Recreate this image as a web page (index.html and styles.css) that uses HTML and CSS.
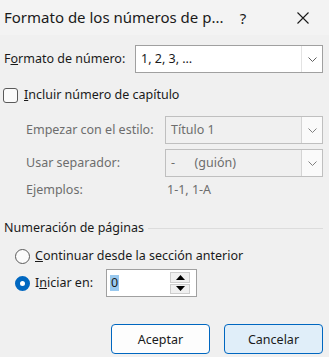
FILE: index.html
```html
<!DOCTYPE html>
<html lang="es">

<head>
    <meta charset="UTF-8">
    <title>Formato de los números de página</title>
    <link rel="stylesheet" href="styles.css">
</head>

<body>

    <div class="dialog">
        <div class="titlebar">
            <div class="title">Formato de los números de p...</div>
            <div class="help">?</div>
            <div class="close">
                <svg width="12" height="12" viewBox="0 0 12 12"><path d="M0.5 0.5 L11.5 11.5 M11.5 0.5 L0.5 11.5" stroke="#1a1a1a" stroke-width="1.1" fill="none"/></svg>
            </div>
        </div>

        <div class="content">
            <div class="row rowFormat">
                <div class="label">F<u>o</u>rmato de número:</div>
                <div class="combo">
                    <div class="comboText">1, 2, 3, …</div>
                    <div class="comboButton">
                        <svg width="9" height="5" viewBox="0 0 9 5"><path d="M0.5 0.5 L4.5 4.5 L8.5 0.5" stroke="#606060" fill="none"/></svg>
                    </div>
                </div>
            </div>

            <div class="check">
                <div class="checkBox"></div>
                <span><u>I</u>ncluir número de capítulo</span>
            </div>

            <div class="chapter">
                <div class="row rowChapter">
                    <div class="label disabled">Empezar con el estilo:</div>
                    <div class="combo comboDisabled">
                        <div class="comboText">Título 1</div>
                        <div class="comboButton">
                            <svg width="9" height="5" viewBox="0 0 9 5"><path d="M0.5 0.5 L4.5 4.5 L8.5 0.5" stroke="#808080" fill="none"/></svg>
                        </div>
                    </div>
                </div>
                <div class="row rowChapter">
                    <div class="label disabled">Usar separador:</div>
                    <div class="combo comboDisabled">
                        <div class="comboText">-&nbsp;&nbsp;&nbsp;&nbsp;&nbsp;&nbsp;(guión)</div>
                        <div class="comboButton">
                            <svg width="9" height="5" viewBox="0 0 9 5"><path d="M0.5 0.5 L4.5 4.5 L8.5 0.5" stroke="#808080" fill="none"/></svg>
                        </div>
                    </div>
                </div>
                <div class="row rowExample">
                    <div class="label disabled">Ejemplos:</div>
                    <div class="exampleText disabled">1-1, 1-A</div>
                </div>
            </div>

            <div class="group">
                <span>Numeración de páginas</span>
                <div class="groupLine"></div>
            </div>

            <div class="radio">
                <div class="radioCircle"></div>
                <span><u>C</u>ontinuar desde la sección anterior</span>
            </div>
            <div class="radio radioStart">
                <div class="radioCircle radioOn"></div>
                <span class="startLabel">I<u>n</u>iciar en:</span>
                <div class="spin">
                    <div class="spinText"><span class="selected">0</span></div>
                    <div class="spinButtons">
                        <div class="spinBtn">
                            <svg width="9" height="5" viewBox="0 0 9 5"><path d="M0 5 L4.5 0 L9 5 Z" fill="#000"/></svg>
                        </div>
                        <div class="spinBtn">
                            <svg width="9" height="5" viewBox="0 0 9 5"><path d="M0 0 L4.5 5 L9 0 Z" fill="#000"/></svg>
                        </div>
                    </div>
                </div>
            </div>

            <div class="buttons">
                <button class="button">Aceptar</button>
                <button class="button buttonCancel">Cancelar</button>
            </div>
        </div>
    </div>

</body>

</html>
```

FILE: styles.css
```css
body {
    margin: 0;
    background: #f0f0f0;
    font-family: 'Noto Sans', sans-serif;
    font-size: 12.5px;
    line-height: 16px;
    color: #1a1a1a;
}

.dialog {
    width: 329px;
    height: 357px;
    overflow: hidden;
}

.titlebar {
    height: 35px;
    background: #f3f3f3;
    display: flex;
    align-items: center;
}

.title {
    font-size: 15px;
    padding-left: 4px;
    flex: 1;
    margin-top: -1px;
}

.help {
    font-size: 15px;
    width: 20px;
    text-align: center;
    margin-right: 44px;
}

.close {
    width: 12px;
    margin-right: 20px;
    display: flex;
}

.content {
    padding: 10px 6px 0 4px;
}

.row {
    display: flex;
    align-items: center;
}

.label {
    white-space: nowrap;
}

.disabled {
    color: #6d6d6d;
}

.rowFormat .label {
    width: 131px;
}

.combo {
    height: 28px;
    box-sizing: border-box;
    border: 1px solid #a0a0a0;
    background: #fff;
    display: flex;
    flex: 1;
}

.comboText {
    flex: 1;
    padding-left: 5px;
    line-height: 26px;
}

.comboButton {
    width: 20px;
    border-left: 1px solid #e3e3e3;
    display: flex;
    align-items: center;
    justify-content: center;
    background: #fff;
}

.comboDisabled {
    background: #f0f0f0;
    border-color: #bfbfbf;
    color: #6d6d6d;
}

.comboDisabled .comboButton {
    background: #fafafa;
    border-left-color: #d4d4d4;
}

.check {
    display: flex;
    align-items: center;
    margin-top: 14px;
    gap: 6px;
}

.checkBox {
    width: 13px;
    height: 13px;
    border: 1px solid #5a5a5a;
    border-radius: 3px;
    background: #fbfbfb;
    margin-left: -1px;
}

.chapter {
    padding-left: 22px;
    margin-top: 13px;
}

.rowChapter {
    margin-bottom: 5px;
}

.rowChapter .label {
    width: 139px;
}

.rowExample {
    margin-top: 0;
}

.rowExample .label {
    width: 141px;
}

.group {
    display: flex;
    align-items: center;
    margin-top: 22px;
    gap: 4px;
}

.groupLine {
    flex: 1;
    height: 1px;
    background: #dcdcdc;
}

.radio {
    display: flex;
    align-items: center;
    padding-left: 11px;
    margin-top: 12px;
    gap: 5px;
}

.radioCircle {
    width: 13px;
    height: 13px;
    border: 1px solid #5a5a5a;
    border-radius: 50%;
    background: #fbfbfb;
}

.radioOn {
    width: 5px;
    height: 5px;
    border: 5px solid #0067c0;
    background: #fff;
}

.radioStart {
    margin-top: 5px;
}

.startLabel {
    width: 66px;
}

.spin {
    width: 91px;
    height: 28px;
    box-sizing: border-box;
    border: 1px solid #a0a0a0;
    background: #fff;
    display: flex;
}

.spinText {
    flex: 1;
    padding-left: 3px;
    display: flex;
    align-items: center;
}

.selected {
    background: #99c9ef;
    padding: 0 1px;
    line-height: 16px;
}

.spinButtons {
    width: 20px;
    padding: 2px 6px 2px 0;
    display: flex;
    flex-direction: column;
    gap: 1px;
}

.spinBtn {
    flex: 1;
    background: #f0f0f0;
    border: 1px solid #cdcdcd;
    display: flex;
    align-items: center;
    justify-content: center;
}

.buttons {
    display: flex;
    justify-content: flex-end;
    gap: 14px;
    margin-top: 27px;
}

.button {
    width: 99px;
    height: 30px;
    border: 1px solid #0067c0;
    border-radius: 4px;
    background: #fdfdfd;
    font-family: 'Noto Sans', sans-serif;
    font-size: 12.5px;
    color: #1a1a1a;
}

.buttonCancel {
    background: #e0eef9;
}
```
